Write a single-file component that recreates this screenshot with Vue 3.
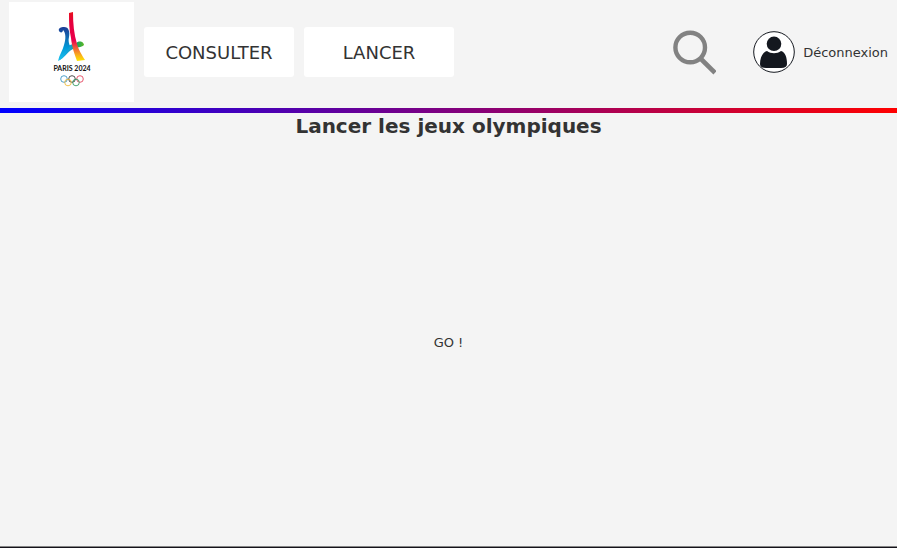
<script setup>
const links = ['CONSULTER', 'LANCER']
</script>

<template>
  <div class="page">
    <header class="header">
      <svg class="logo" viewBox="0 0 125 100" role="img" aria-label="Paris 2024">
        <defs>
          <linearGradient id="tower" x1="0" y1="0" x2="0" y2="1">
            <stop offset="0" stop-color="#e8101c" />
            <stop offset="0.2" stop-color="#e5003c" />
            <stop offset="0.58" stop-color="#ea004c" />
            <stop offset="0.74" stop-color="#f2603a" />
            <stop offset="0.88" stop-color="#f9b01c" />
            <stop offset="1" stop-color="#ffe600" />
          </linearGradient>
          <linearGradient id="curl" x1="0" y1="0" x2="0" y2="1">
            <stop offset="0" stop-color="#1d3c96" />
            <stop offset="0.3" stop-color="#1268b0" />
            <stop offset="0.6" stop-color="#0099d8" />
            <stop offset="1" stop-color="#20c4f0" />
          </linearGradient>
          <linearGradient id="arm" x1="0" y1="0" x2="1" y2="0">
            <stop offset="0" stop-color="#12a9df" />
            <stop offset="0.45" stop-color="#159fd0" />
            <stop offset="0.75" stop-color="#1ba75b" />
            <stop offset="1" stop-color="#62b722" />
          </linearGradient>
        </defs>
        <rect width="125" height="100" fill="#fff" />
        <path fill="url(#arm)" d="M50 58 C53 50 58 43 64 42 C68 42 67 39.5 71 39.5 C74 39.5 75 42 75 43 C72 46 68 44.5 64 47 C58 50 55 57 50 58Z" />
        <path fill="url(#curl)" d="M50 29 C49 26 52 25 55 25 C60 25 61 30 60 35 C59 38 60 42 61 44 C58 49 55 57 49 59 C50 53 54 48 55 43 C57 37 57 31 54 28 C54 31 51 31 50 29Z" />
        <path fill="url(#tower)" d="M60 11 L64 10 C64 22 65 32 68 42 C70 49 73 53 76 58 L68 59 C65 51 63 45 62 36 C60 27 60 20 60 11Z" />
        <text class="logo-text" x="63" y="69" text-anchor="middle">PARIS 2024</text>
        <g fill="none" stroke-width="0.8">
          <circle cx="55" cy="77" r="3.3" stroke="#2589bd" />
          <circle cx="63" cy="77" r="3.3" stroke="#222" />
          <circle cx="71" cy="77" r="3.3" stroke="#df304c" />
          <circle cx="59" cy="80.5" r="3.3" stroke="#f0b52b" />
          <circle cx="67" cy="80.5" r="3.3" stroke="#239355" />
        </g>
      </svg>
      <nav class="nav">
        <button v-for="link in links" :key="link" class="nav-button" type="button">{{ link }}</button>
      </nav>
      <button class="search" type="button" aria-label="Rechercher">
        <svg viewBox="0 0 44 46" width="44" height="46" fill="none" stroke="#828282">
          <circle cx="18.2" cy="18.5" r="14.8" stroke-width="4.4" />
          <path d="M28.5 29.5 L43 43.8" stroke-width="4.6" />
        </svg>
      </button>
      <button class="account" type="button">
        <svg viewBox="0 0 42 42" width="42" height="42" aria-hidden="true">
          <circle cx="21" cy="21" r="20.3" fill="#fff" stroke="#14181f" />
          <circle cx="21" cy="12.8" r="7.3" fill="#14181f" />
          <path fill="#14181f" d="M14 20 C18 23 24 23 28 20 C32 21 34 26 34 33 Q34 37 28 37 H13 Q7 37 7 33 C7 26 10 21 14 20Z" />
        </svg>
        <span>Déconnexion</span>
      </button>
    </header>
    <div class="stripe"></div>
    <main class="main">
      <h1 class="title">Lancer les jeux olympiques</h1>
      <div class="stage">
        <button class="go" type="button">GO !</button>
      </div>
    </main>
    <div class="bottom-edge"></div>
  </div>
</template>

<style>
body {
  margin: 0;
  background: #f4f4f4;
}
</style>

<style scoped>
.page {
  display: flex;
  flex-direction: column;
  min-height: 100vh;
  background: #f4f4f4;
  color: #333;
  font: 13px "DejaVu Sans", sans-serif;
}
button {
  padding: 0;
  border: 0;
  background: none;
  color: inherit;
  font: inherit;
  cursor: pointer;
}
.header {
  display: flex;
  align-items: center;
  padding: 2px 9px 6px;
}
.logo {
  width: 125px;
  height: 100px;
  flex: none;
}
.logo-text {
  font: bold 7px Lato, sans-serif;
  fill: #111;
}
.nav {
  display: flex;
  gap: 10px;
  margin-left: 10px;
}
.nav-button {
  width: 150px;
  height: 50px;
  border-radius: 3px;
  background: #fff;
  font-size: 18px;
}
.search {
  margin-left: auto;
}
.search svg,
.account svg {
  display: block;
}
.account {
  display: flex;
  align-items: center;
  gap: 8px;
  margin-left: 37px;
}
.stripe {
  height: 5px;
  background: linear-gradient(to right, #00f, #f00);
}
.main {
  display: flex;
  flex: 1;
  flex-direction: column;
}
.title {
  margin: 0;
  font-size: 20px;
  line-height: 26px;
  text-align: center;
}
.stage {
  display: flex;
  flex: 1;
  align-items: center;
  justify-content: center;
}
.bottom-edge {
  height: 1px;
  border-top: 1px solid #858585;
  background: #14121a;
}
</style>
